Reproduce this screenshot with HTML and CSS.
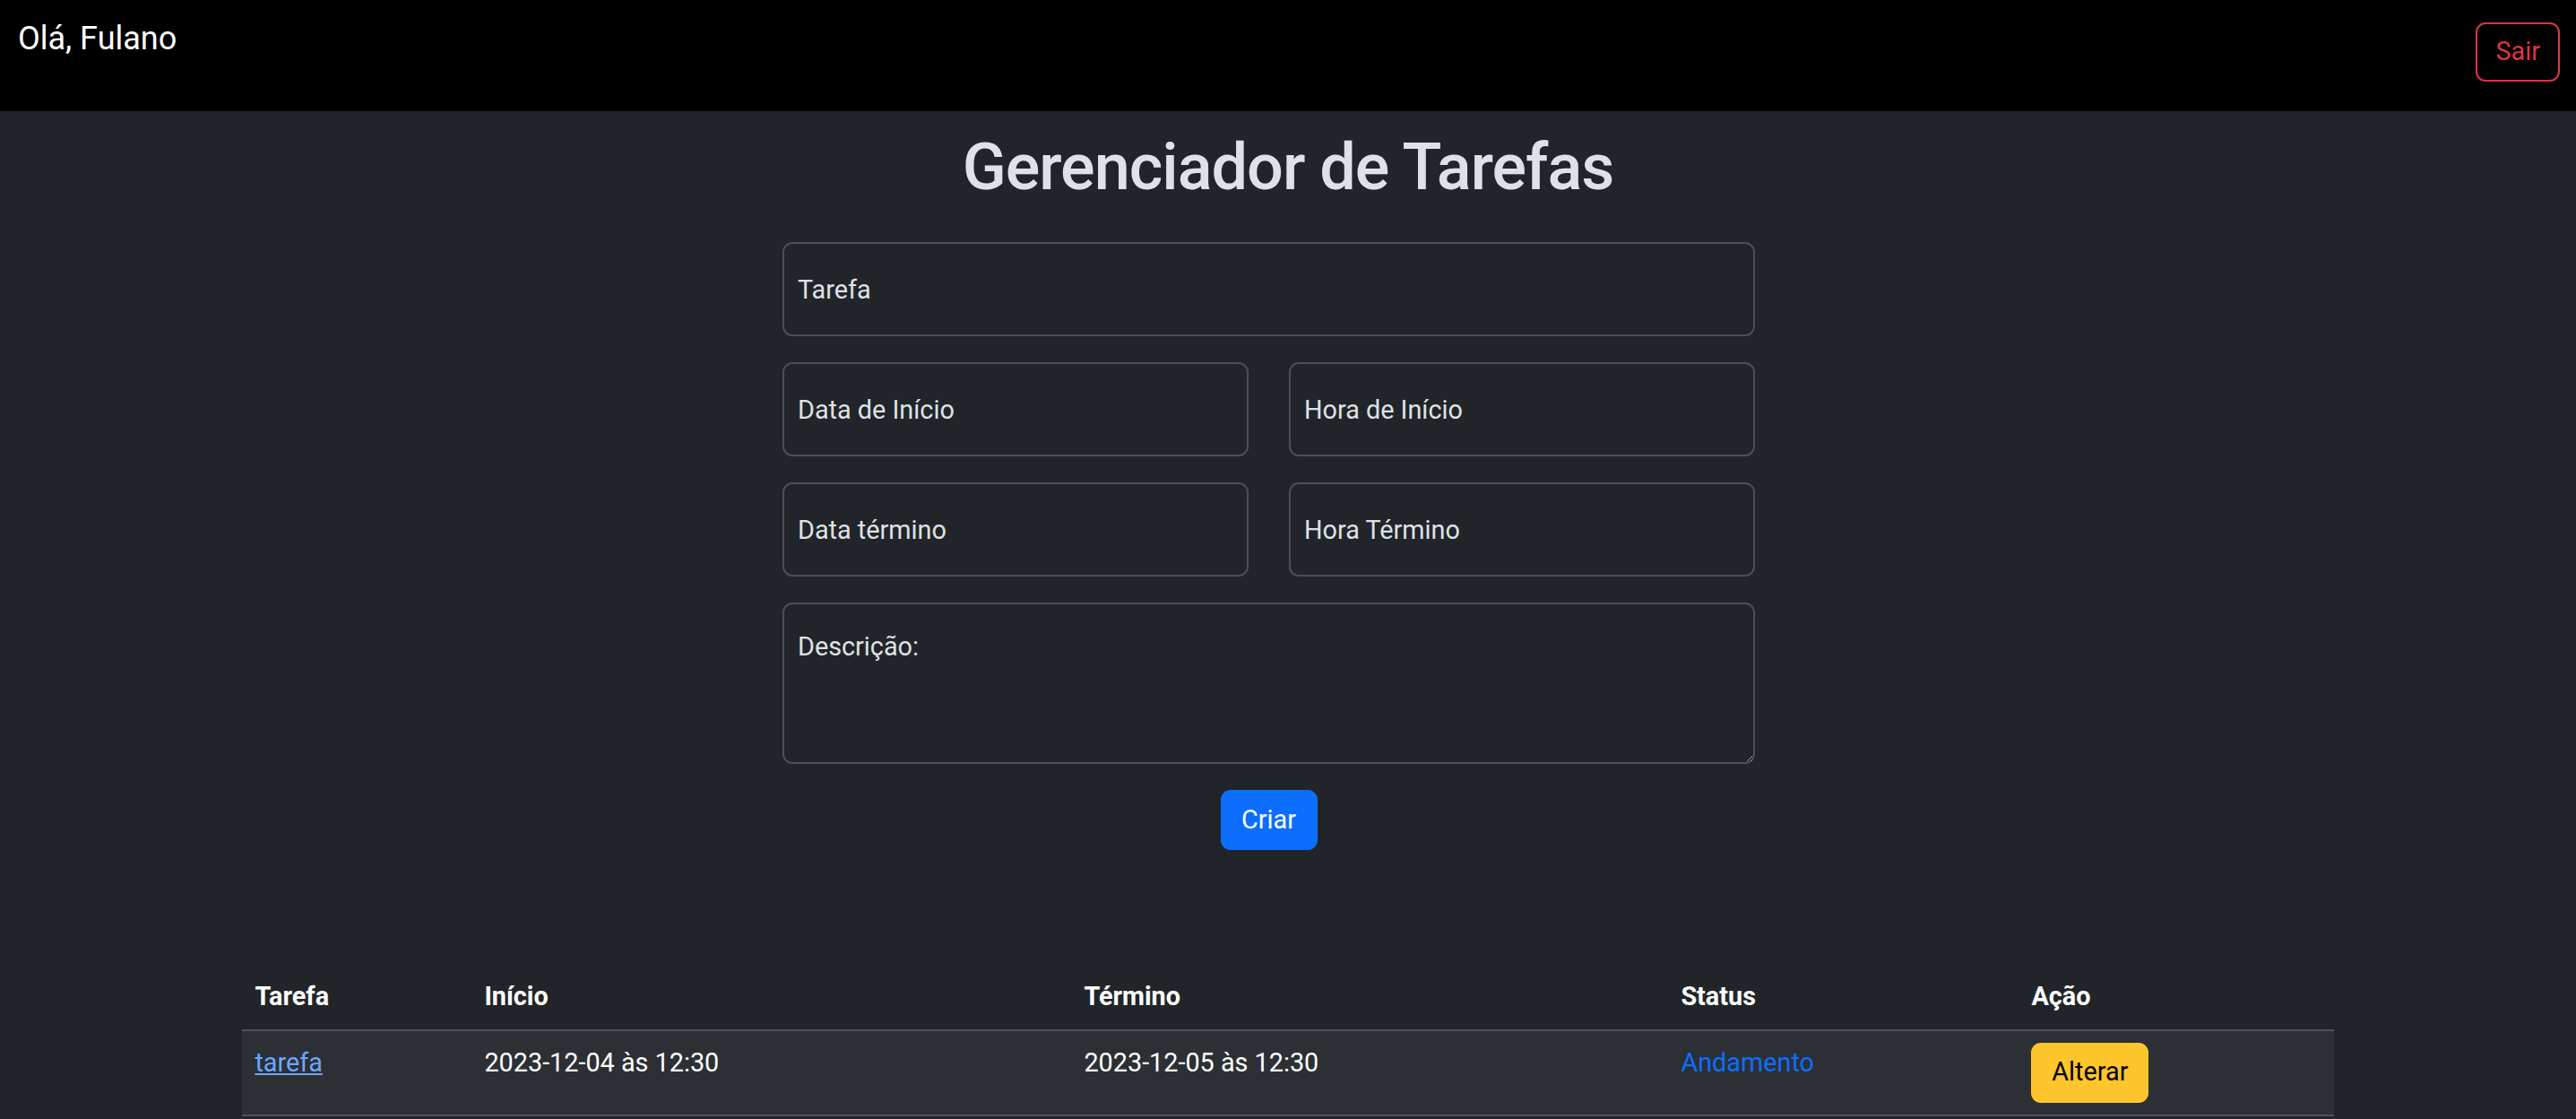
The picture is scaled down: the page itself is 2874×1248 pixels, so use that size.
FILE: index.html
```html
<!DOCTYPE html>
<html lang="pt-BR">
<head>
    <meta charset="UTF-8">
    <meta name="viewport" content="width=device-width, initial-scale=1"/>
    <title>Gerenciador de Tarefas</title>
    <link rel="stylesheet" href="styles.css">
</head>
<body>
<nav class="navbar">
    <span class="brand">Olá, Fulano</span>
    <button class="btn btn-outline-danger">Sair</button>
</nav>
<main class="page">
    <h1 class="title">Gerenciador de Tarefas</h1>
    <form class="task-form">
        <div class="field">
            <input type="text" class="control" placeholder="Tarefa">
        </div>
        <div class="field-row">
            <input type="text" class="control" placeholder="Data de Início">
            <input type="text" class="control" placeholder="Hora de Início">
        </div>
        <div class="field-row">
            <input type="text" class="control" placeholder="Data término">
            <input type="text" class="control" placeholder="Hora Término">
        </div>
        <div class="field">
            <textarea class="control area" placeholder="Descrição:"></textarea>
        </div>
        <div class="actions">
            <button type="button" class="btn btn-primary">Criar</button>
        </div>
    </form>
    <div class="table-wrap">
        <table class="tasks">
            <colgroup>
                <col class="c-task">
                <col class="c-start">
                <col class="c-end">
                <col class="c-status">
                <col class="c-action">
            </colgroup>
            <thead>
            <tr>
                <th>Tarefa</th>
                <th>Início</th>
                <th>Término</th>
                <th>Status</th>
                <th>Ação</th>
            </tr>
            </thead>
            <tbody>
            <tr>
                <td><a href="#" class="task-link">tarefa</a></td>
                <td>2023-12-04 às 12:30</td>
                <td>2023-12-05 às 12:30</td>
                <td class="status">Andamento</td>
                <td><button class="btn btn-warning">Alterar</button></td>
            </tr>
            </tbody>
        </table>
    </div>
</main>
</body>
</html>
```

FILE: styles.css
```css
* {
    box-sizing: border-box;
}

body {
    margin: 0;
    background-color: #212529;
    color: #dee2e6;
    font-family: Roboto, "Liberation Sans", Arial, sans-serif;
    font-size: 28.8px;
    line-height: 1.5;
}

.navbar {
    display: flex;
    justify-content: space-between;
    align-items: flex-start;
    height: 124px;
    padding: 16px 18px 0 20px;
    background-color: #000;
}

.brand {
    color: #fff;
    font-size: 36px;
    line-height: 1.5;
}

.btn {
    display: inline-block;
    font-family: inherit;
    font-size: 28.8px;
    line-height: 1.5;
    padding: 10px 21px;
    border: 2px solid transparent;
    border-radius: 11px;
    cursor: pointer;
}

.btn-outline-danger {
    margin-top: 9px;
    height: 66px;
    padding: 0 20px;
    color: #dc3545;
    background: transparent;
    border-color: #dc3545;
}

.btn-primary {
    width: 108px;
    height: 67px;
    padding: 0;
    color: #fff;
    background-color: #0d6efd;
    border-color: #0d6efd;
}

.btn-warning {
    width: 131px;
    height: 67px;
    padding: 0;
    color: #000;
    background-color: #ffc52c;
    border-color: #ffc52c;
}

.title {
    margin: 20px 0 40px;
    text-align: center;
    font-size: 72px;
    font-weight: 500;
    line-height: 1.2;
    letter-spacing: -1px;
    color: #dee2e6;
}

.task-form {
    width: 1128px;
    margin: 0 auto;
    padding-right: 43px;
}

.field {
    margin-bottom: 29px;
}

.field-row {
    display: grid;
    grid-template-columns: 1fr 1fr;
    gap: 45px;
    margin-bottom: 29px;
}

.control {
    display: block;
    width: 100%;
    height: 105px;
    padding: 0 15px;
    font-family: inherit;
    font-size: 28.8px;
    color: #dee2e6;
    background-color: #212529;
    border: 2px solid #495057;
    border-radius: 11px;
}

.control::placeholder {
    color: #dee2e6;
    opacity: 1;
}

.area {
    height: 180px;
    padding: 26px 15px;
    line-height: 1.5;
    resize: vertical;
}

.actions {
    text-align: center;
}

.table-wrap {
    width: 2334px;
    margin: 128px auto 0;
}

.tasks {
    width: 100%;
    table-layout: fixed;
    border-collapse: collapse;
    color: #fff;
}

.c-task { width: 256px; }
.c-start { width: 669px; }
.c-end { width: 666px; }
.c-status { width: 391px; }
.c-action { width: 352px; }

.tasks th,
.tasks td {
    padding: 14px 14.4px;
    text-align: left;
    vertical-align: top;
    border-bottom: 2px solid #4d5154;
}

.tasks th {
    font-weight: 700;
}

.tasks tbody tr {
    background-color: #2c3034;
}

.tasks td {
    padding-bottom: 13px;
}

.tasks td .btn {
    margin-top: -1px;
}

.task-link {
    color: #6ea8fe;
}

.status {
    color: #0d6efd;
}
```
